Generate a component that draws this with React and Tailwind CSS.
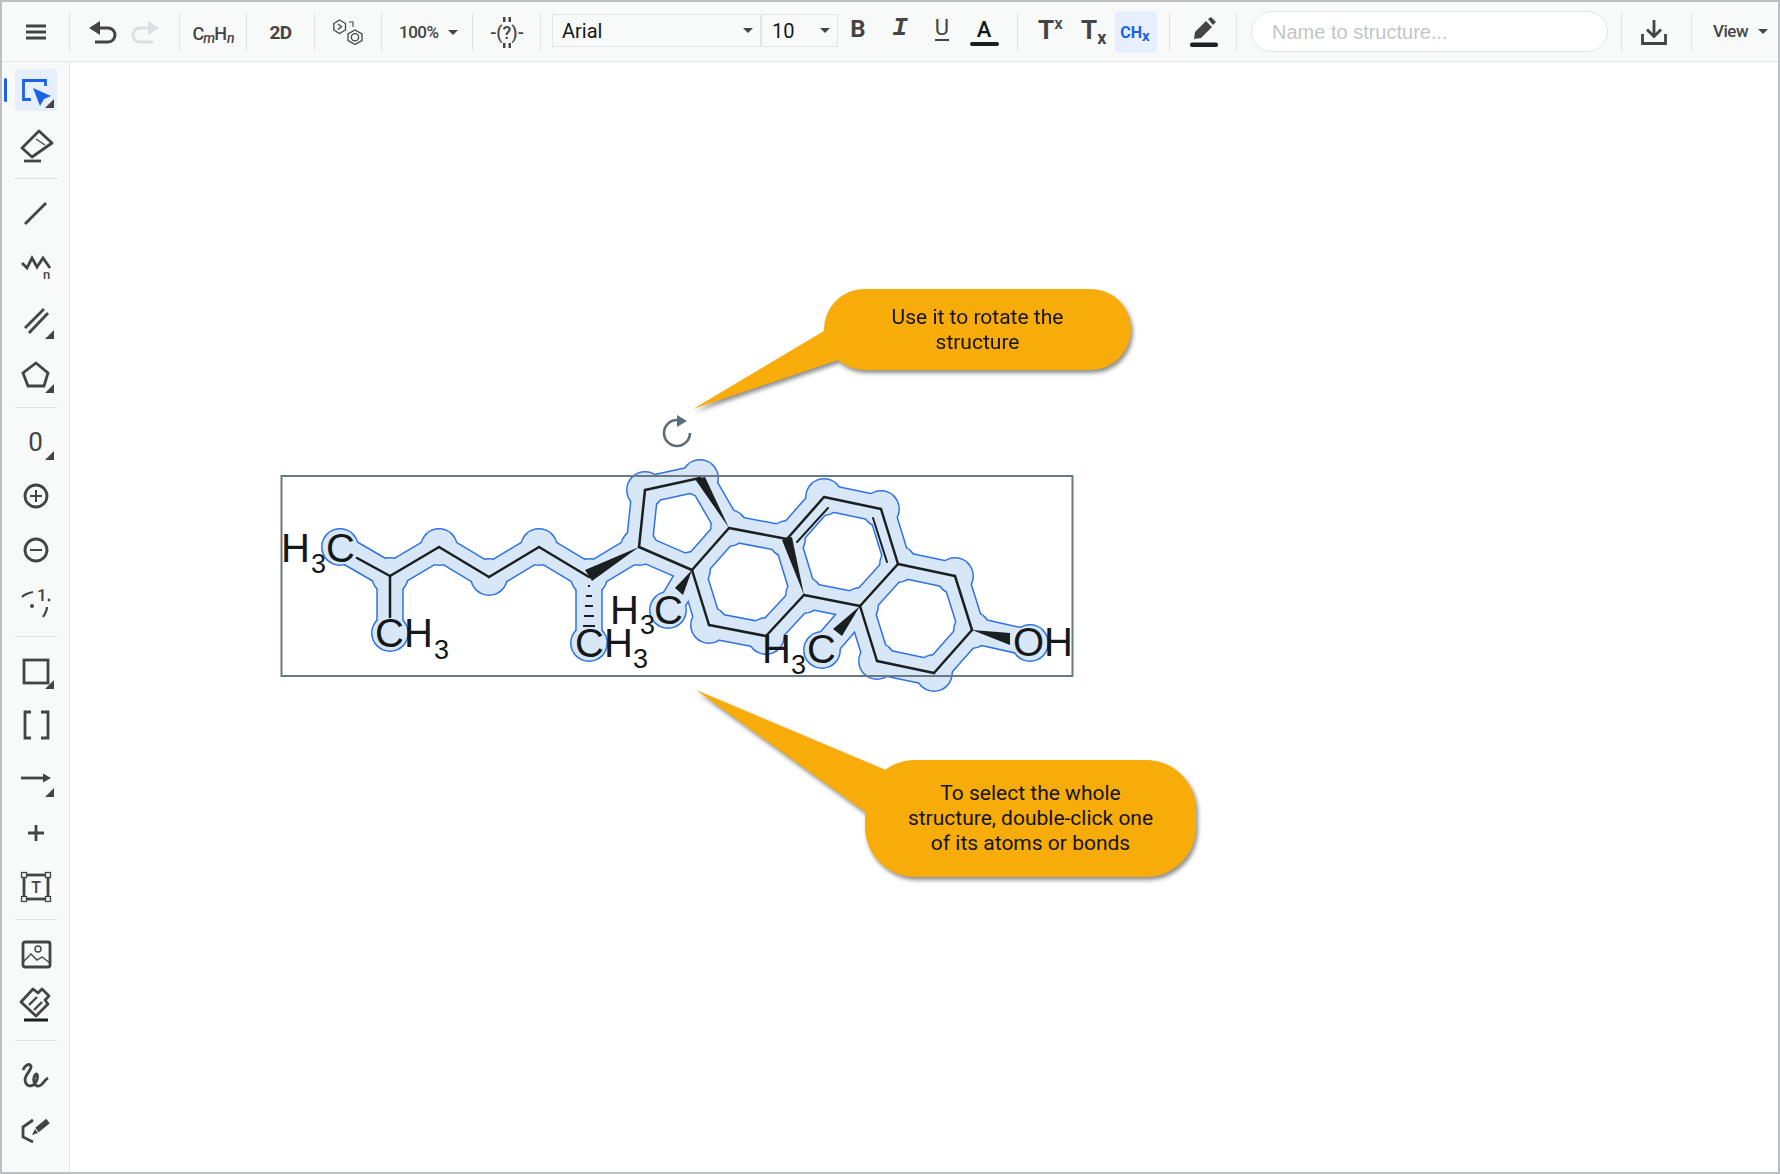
import React from 'react';

const ink = '#444444';

// atom coordinates, page pixels
const a = {
  c0: [340, 547], c1: [390, 576], c2: [390, 633], c3: [439, 547], c4: [489, 577], c5: [539, 547],
  c6: [589, 577], c6m: [589, 643], c7: [639, 547], c8: [645, 490], c9: [692, 570], c9m: [668, 610],
  c10: [700, 478], c11: [729, 528], c12: [787, 539], c13: [824, 497], c14: [881, 509], c15: [898, 564],
  c16: [955, 576], c17: [972, 630], oh: [1030, 643], c19: [934, 673], c20: [877, 661], c21: [860, 606],
  c21m: [822, 650], c22: [804, 595], c23: [766, 636], c24: [709, 625],
};

const bandBonds = [
  ['c0', 'c1'], ['c1', 'c2'], ['c1', 'c3'], ['c3', 'c4'], ['c4', 'c5'], ['c5', 'c6'], ['c6', 'c6m'], ['c6', 'c7'],
  ['c7', 'c8'], ['c8', 'c10'], ['c10', 'c11'], ['c7', 'c9'], ['c9', 'c11'], ['c9', 'c9m'], ['c9', 'c24'], ['c24', 'c23'],
  ['c23', 'c22'], ['c22', 'c12'], ['c22', 'c21'], ['c11', 'c12'], ['c12', 'c13'], ['c13', 'c14'], ['c14', 'c15'],
  ['c15', 'c21'], ['c15', 'c16'], ['c16', 'c17'], ['c17', 'oh'], ['c17', 'c19'], ['c19', 'c20'], ['c20', 'c21'], ['c21', 'c21m'],
];

const lineBonds = [
  ['c1', 'c3'], ['c3', 'c4'], ['c4', 'c5'], ['c5', 'c6'], ['c7', 'c8'], ['c8', 'c10'], ['c7', 'c9'], ['c9', 'c11'], ['c9', 'c24'],
  ['c24', 'c23'], ['c23', 'c22'], ['c22', 'c21'], ['c11', 'c12'], ['c12', 'c13'], ['c13', 'c14'], ['c14', 'c15'],
  ['c15', 'c21'], ['c15', 'c16'], ['c16', 'c17'], ['c17', 'c19'], ['c19', 'c20'], ['c20', 'c21'],
];

const wedges = [
  '639,547 585,570 592,581', '729,528 695,479 705,477', '804,595 782,540 792,537',
  '692,570 675,588 683,595', '860,606 833,629 842,636', '972,630 1010,633 1010,645',
];

const Seg = ([p, q], props) => <line key={p + q} x1={a[p][0]} y1={a[p][1]} x2={a[q][0]} y2={a[q][1]} {...props} />;

const Label = ({ x, y, size = 40, children }) => (
  <text x={x} y={y} fontFamily="Liberation Sans, Arial, sans-serif" fontSize={size} fill="#141818">{children}</text>
);

const Molecule = () => (
  <svg className="absolute inset-0 w-full h-full" viewBox="70 62 1708 1110">
    <g stroke="#2f72e6" strokeWidth="27.5" strokeLinecap="round">
      {bandBonds.map((b) => Seg(b))}
    </g>
    <g fill="#2f72e6">
      {Object.keys(a).map((k) => <circle key={k} cx={a[k][0]} cy={a[k][1]} r="19" />)}
    </g>
    <g stroke="#d8e7f8" strokeWidth="24.5" strokeLinecap="round">
      {bandBonds.map((b) => Seg(b))}
    </g>
    <g fill="#d8e7f8">
      {Object.keys(a).map((k) => <circle key={k} cx={a[k][0]} cy={a[k][1]} r="17.5" />)}
    </g>
    <rect x="281.5" y="476" width="791" height="200" fill="none" stroke="#6b7a82" strokeWidth="2" />
    <g stroke="#1a1f1f" strokeWidth="2.5" strokeLinecap="round">
      {lineBonds.map((b) => Seg(b))}
      <line x1="357" y1="558" x2="390" y2="576" />
      <line x1="390" y1="576" x2="390" y2="617" />
      <line x1="797" y1="542" x2="828" y2="508" strokeWidth="2" />
      <line x1="873" y1="518" x2="887" y2="562" strokeWidth="2" />
    </g>
    <g stroke="#1a1f1f" strokeWidth="2">
      <line x1="588" y1="586" x2="590" y2="586" />
      <line x1="586" y1="596" x2="592" y2="596" />
      <line x1="585" y1="606" x2="593" y2="606" />
      <line x1="584" y1="616" x2="594" y2="616" />
      <line x1="583" y1="626" x2="595" y2="626" />
    </g>
    <g fill="#1a1f1f">
      {wedges.map((w) => <polygon key={w} points={w} />)}
    </g>
    <Label x={281} y={562}>H</Label><Label x={311} y={573} size={27}>3</Label><Label x={326} y={562}>C</Label>
    <Label x={375} y={647}>C</Label><Label x={404} y={647}>H</Label><Label x={434} y={659} size={27}>3</Label>
    <Label x={575} y={657}>C</Label><Label x={604} y={657}>H</Label><Label x={633} y={668} size={27}>3</Label>
    <Label x={610} y={624}>H</Label><Label x={640} y={634} size={27}>3</Label><Label x={654} y={624}>C</Label>
    <Label x={762} y={663}>H</Label><Label x={791} y={674} size={27}>3</Label><Label x={807} y={663}>C</Label>
    <Label x={1013} y={656}>O</Label><Label x={1044} y={656}>H</Label>
    <path d="M677 420 A13 13 0 1 0 690 433" fill="none" stroke="#5b6f78" strokeWidth="2.6" />
    <polygon points="677,415 687,421 677,427" fill="#5b6f78" />
  </svg>
);

const Callout = ({ className, points, lines }) => (
  <div className={`absolute drop-shadow-[2px_3px_2px_rgba(0,0,0,0.45)] ${className}`}>
    <svg className="absolute left-0 top-0 overflow-visible" width="1" height="1">
      <polygon points={points} fill="#f8ac0a" />
    </svg>
    <div className="relative w-full h-full flex flex-col items-center justify-center rounded-[50px] bg-[#f8ac0a] text-[21px] leading-[25px] text-[#141414] font-['Roboto',sans-serif]">
      {lines.map((l) => <span key={l}>{l}</span>)}
    </div>
  </div>
);

const Sep = () => <div className="w-px h-[38px] bg-[#dfe2e2] shrink-0" />;

const Caret = () => <span className="w-0 h-0 border-x-[5px] border-x-transparent border-t-[5px] border-t-[#444]" />;

const Box = ({ className, children }) => (
  <div className={`h-full flex items-center justify-center shrink-0 ${className}`}>{children}</div>
);

const Toolbar = () => (
  <header className="h-[60px] shrink-0 flex items-center bg-[#f8fafa] border-b border-[#e3e6e6] text-[#444] font-['Roboto',sans-serif]">
    <Box className="w-[67px]">
      <svg width="20" height="16" viewBox="0 0 20 16"><path d="M0 2H20M0 8H20M0 14H20" stroke={ink} strokeWidth="2.8" /></svg>
    </Box>
    <Sep />
    <Box className="w-[109px] pl-[19px] gap-[14px] justify-start">
      <svg width="28" height="24" viewBox="0 0 28 24">
        <polygon points="0,8 11,1 11,15" fill={ink} />
        <path d="M10 8H19a7 7 0 0 1 0 14H6" fill="none" stroke={ink} strokeWidth="3" />
      </svg>
      <svg width="28" height="24" viewBox="0 0 28 24">
        <polygon points="28,8 17,1 17,15" fill="#dcdfdf" />
        <path d="M18 8H9a7 7 0 0 0 0 14H22" fill="none" stroke="#dcdfdf" strokeWidth="3" />
      </svg>
    </Box>
    <Sep />
    <Box className="w-[66px] pt-[4px]">
      <span className="flex items-baseline text-[18px] font-medium tracking-[-1px]">
        C<i className="text-[14px] translate-y-[3px]">m</i>H<i className="text-[14px] translate-y-[3px] ml-px">n</i>
      </span>
    </Box>
    <Sep />
    <Box className="w-[67px] pt-[3px] text-[19px] font-bold tracking-[-0.5px]">2D</Box>
    <Sep />
    <Box className="w-[66px]">
      <svg width="30" height="26" viewBox="0 0 30 26" fill="none" stroke={ink} strokeWidth="1.3">
        <polygon points="6.5,1 12.5,4.5 12.5,11 6.5,14.5 0.8,11 0.8,4.5" />
        <path d="M5 5L8.5 7.7L5 10.5" />
        <polygon points="22,11 29,15 29,21.5 22,25.5 15,21.5 15,15" />
        <circle cx="22" cy="18.3" r="3.6" />
        <path d="M16 3H20V8" strokeWidth="1.1" />
      </svg>
    </Box>
    <Sep />
    <Box className="w-[90px] pl-[17px] pt-[2px] gap-[9px] justify-start text-[17px] font-medium tracking-[-0.5px]">100%<Caret /></Box>
    <Sep />
    <Box className="w-[67px] pt-[3px]">
      <svg width="36" height="32" viewBox="0 0 36 32">
        <text x="18" y="22" textAnchor="middle" fontFamily="Roboto, sans-serif" fontSize="18" fontWeight="500" fill={ink}>-(?)-</text>
        <path d="M14 0h2.5v5h-2.5zM19.5 0h2.5v5h-2.5zM14 26h2.5v5h-2.5zM19.5 26h2.5v5h-2.5z" fill={ink} />
      </svg>
    </Box>
    <Sep />
    <div className="ml-[11px] flex h-[33px] mb-[2px] shrink-0 border border-[#e3e6e6] text-[20px] text-[#141818]">
      <div className="w-[209px] pl-[9px] pr-[7px] flex items-center justify-between border-r-2 border-[#e3e6e6]">Arial<Caret /></div>
      <div className="w-[75px] pl-[10px] pr-[7px] flex items-center justify-between">10<Caret /></div>
    </div>
    <Box className="w-[42px] text-[24px] font-bold pb-[6px] -ml-px">B</Box>
    <Box className="w-[42px] text-[26px] font-bold italic pb-[6px] font-['Liberation_Mono',monospace]">I</Box>
    <Box className="w-[42px] pb-[6px]"><span className="text-[22px] leading-[23px] border-b-2 border-[#444]">U</span></Box>
    <Box className="w-[42px] flex-col">
      <span className="text-[22px] leading-[23px] font-medium text-[#141818]">A</span>
      <span className="w-[29px] h-[4px] mt-[1px] rounded-full bg-[#1a1f1f]" />
    </Box>
    <div className="ml-[12px]"><Sep /></div>
    <div className="ml-[20px] w-[28px] h-full flex items-start shrink-0 pt-[13px] font-bold">
      <span className="text-[26px] leading-[30px]">T</span>
      <span className="text-[17px] leading-[17px] font-medium">x</span>
    </div>
    <div className="ml-[15px] w-[24px] h-full flex items-start shrink-0 pt-[13px] font-bold">
      <span className="text-[26px] leading-[30px]">T</span>
      <span className="text-[18px] leading-[18px] mt-[14px]">x</span>
    </div>
    <div className="ml-[10px] w-[42px] h-[42px] rounded-[3px] shrink-0 flex items-center justify-center bg-[#e8effc] text-[#1a62e8] font-bold">
      <span className="text-[16px] leading-[16px] mt-[2px] -ml-[2px]">CH</span>
      <span className="text-[15px] leading-[15px] mt-[10px]">x</span>
    </div>
    <div className="ml-[12px]"><Sep /></div>
    <Box className="w-[66px]">
      <svg width="30" height="32" viewBox="0 0 30 32">
        <polygon points="6,23 7,16 18,5 24,11 13,22" fill={ink} />
        <polygon points="20,3 23,1 28,6 25,9" fill={ink} />
        <rect x="2" y="26.5" width="28" height="4.5" rx="2" fill="#1a1f1f" />
      </svg>
    </Box>
    <Sep />
    <div className="ml-[14px] w-[357px] h-[41px] shrink-0 flex items-center pl-[20px] rounded-full bg-white border border-[#e3e6e6] text-[20px] text-[#c3c6c6] font-['Liberation_Sans',sans-serif]">
      Name to structure...
    </div>
    <div className="ml-[13px]"><Sep /></div>
    <Box className="w-[69px] pr-[6px]">
      <svg width="26" height="26" viewBox="0 0 26 26" fill="none" stroke={ink} strokeWidth="2.8">
        <path d="M13 1V17M6 10.5L13 17.5L20 10.5M1.5 15V24.5H24.5V15" />
      </svg>
    </Box>
    <Sep />
    <div className="pl-[21px] flex items-center gap-[10px] text-[17px] font-medium tracking-[-0.5px]">View<Caret /></div>
  </header>
);

const Corner = () => (
  <span className="absolute right-[15px] bottom-[9px] w-0 h-0 border-l-[9px] border-l-transparent border-b-[9px] border-b-[#444]" />
);

const Tool = ({ corner, children }) => (
  <div className="relative w-full h-[54px] shrink-0 flex items-center justify-center">
    {children}
    {corner && <Corner />}
  </div>
);

const Icon = ({ children }) => (
  <svg width="36" height="36" viewBox="0 0 36 36" fill="none" stroke={ink} strokeWidth="2.8" className="overflow-visible">
    {children}
  </svg>
);

const Divider = () => <div className="w-[42px] h-px mt-[5px] mb-[7px] shrink-0 bg-[#dfe2e2]" />;

const Sidebar = () => (
  <aside className="w-[68px] shrink-0 pl-px pt-px flex flex-col items-center bg-[#f8fafa] border-r border-[#e3e6e6] font-['Roboto',sans-serif]">
    <Tool corner>
      <span className="absolute left-[1px] top-[15px] w-[3px] h-[24px] rounded-sm bg-[#1a62e8]" />
      <div className="w-[42px] h-[42px] rounded-[3px] flex items-center justify-center bg-[#e8effc]">
        <svg width="36" height="36" viewBox="0 0 36 36" fill="none">
          <path d="M13 27.5H5.5V8.5H27.5V14" stroke="#1a62e8" strokeWidth="2.8" />
          <polygon points="15,16 33,24 26,27 22,34" fill="#1a62e8" />
        </svg>
      </div>
    </Tool>
    <div className="mt-[2px] w-full">
      <Tool>
        <Icon>
          <polygon points="21,3 34,15 14,29 4,20" strokeLinejoin="round" />
          <path d="M18 11L27 17" strokeWidth="1.4" />
          <path d="M6 33H23" />
        </Icon>
      </Tool>
    </div>
    <Divider />
    <Tool><Icon><path d="M7 29L28 8" /></Icon></Tool>
    <Tool>
      <Icon>
        <path d="M4 14L9 19L14 9L19 18L25 9L32 19" />
        <text x="25" y="30" fontSize="13" fontWeight="500" fill={ink} stroke="none" fontFamily="Roboto, sans-serif">n</text>
      </Icon>
    </Tool>
    <Tool corner><Icon><path d="M7 25L26 6M11 30L30 10" /></Icon></Tool>
    <Tool corner><Icon><polygon points="18,6 30,16 26,29 10,29 5,16" /></Icon></Tool>
    <Divider />
    <Tool corner><span className="text-[26px] leading-none text-[#444] -ml-px">0</span></Tool>
    <Tool><Icon><circle cx="18" cy="18" r="11" /><path d="M12 18H24M18 12V24" strokeWidth="2" /></Icon></Tool>
    <Tool><Icon><circle cx="18" cy="18" r="11" /><path d="M12 18H24" strokeWidth="2" /></Icon></Tool>
    <Tool>
      <Icon>
        <path d="M4 11C7 8 10 7 15 6M29 21C29 25 27 28 25 31" strokeWidth="2.2" />
        <circle cx="14" cy="20" r="2" fill={ink} stroke="none" />
        <circle cx="31" cy="14" r="1.4" fill={ink} stroke="none" />
        <text x="19" y="15" fontSize="17" fontWeight="500" fill={ink} stroke="none" fontFamily="Roboto, sans-serif">1</text>
      </Icon>
    </Tool>
    <Divider />
    <Tool corner><Icon><rect x="6" y="7" width="24" height="23" /></Icon></Tool>
    <Tool><Icon><path d="M13 5H7V31H13M23 5H30V31H23" /></Icon></Tool>
    <Tool corner>
      <Icon>
        <path d="M3 17H27" />
        <polygon points="33,17 25,12.5 25,21.5" fill={ink} stroke="none" />
      </Icon>
    </Tool>
    <Tool><Icon><path d="M10 18H26M18 10V26" /></Icon></Tool>
    <Tool>
      <Icon>
        <rect x="6" y="6" width="24" height="24" />
        <g fill="#f8fafa" strokeWidth="1.3">
          <rect x="3.5" y="3.5" width="5" height="5" />
          <rect x="27.5" y="3.5" width="5" height="5" />
          <rect x="3.5" y="27.5" width="5" height="5" />
          <rect x="27.5" y="27.5" width="5" height="5" />
        </g>
        <text x="18" y="24" textAnchor="middle" fontSize="16" fontWeight="500" fill={ink} stroke="none" fontFamily="Roboto, sans-serif">T</text>
      </Icon>
    </Tool>
    <Divider />
    <Tool>
      <Icon>
        <rect x="5" y="6" width="27" height="25" rx="2" />
        <circle cx="20" cy="13" r="3" strokeWidth="1.4" />
        <path d="M5 26L13 18L19 24L24 21L32 27" strokeWidth="1.4" />
      </Icon>
    </Tool>
    <Tool>
      <Icon>
        <path d="M3 12L15 -1L20 3L24 -1L31 6L27 10L30 14L18 26Z" strokeLinejoin="round" />
        <path d="M11 15L19 7M16 20L24 12" strokeWidth="2.4" />
        <path d="M6 30H30" stroke="#1a1f1f" strokeWidth="3" />
      </Icon>
    </Tool>
    <Divider />
    <Tool>
      <Icon>
        <path d="M5 13C7 8 11 6 13 9C14 13 7 17 7 23C8 30 14 31 18 25C21 19 19 15 17 18C14 23 17 30 21 29C25 28 26 23 30 21" />
      </Icon>
    </Tool>
    <Tool>
      <Icon>
        <path d="M15 9L5 16V26L15 31" />
        <path d="M19 19L30 10" strokeWidth="5.5" />
        <polygon points="14,24 20,22 17,18" fill={ink} stroke="none" />
      </Icon>
    </Tool>
  </aside>
);

export default function App() {
  return (
    <div className="w-[1780px] h-[1174px] flex flex-col border-2 border-[#bdc0c0] bg-white overflow-hidden">
      <Toolbar />
      <div className="flex-1 flex min-h-0">
        <Sidebar />
        <main className="relative flex-1 bg-white">
          <Molecule />
          <Callout
            className="left-[754px] top-[227px] w-[307px] h-[81px]"
            points="-131,120 0,42 30,42 30,71 14,71"
            lines={['Use it to rotate the', 'structure']}
          />
          <Callout
            className="left-[795px] top-[698px] w-[331px] h-[117px]"
            points="-169,-70 23,11 30,40 0,52"
            lines={['To select the whole', 'structure, double-click one', 'of its atoms or bonds']}
          />
        </main>
      </div>
    </div>
  );
}
